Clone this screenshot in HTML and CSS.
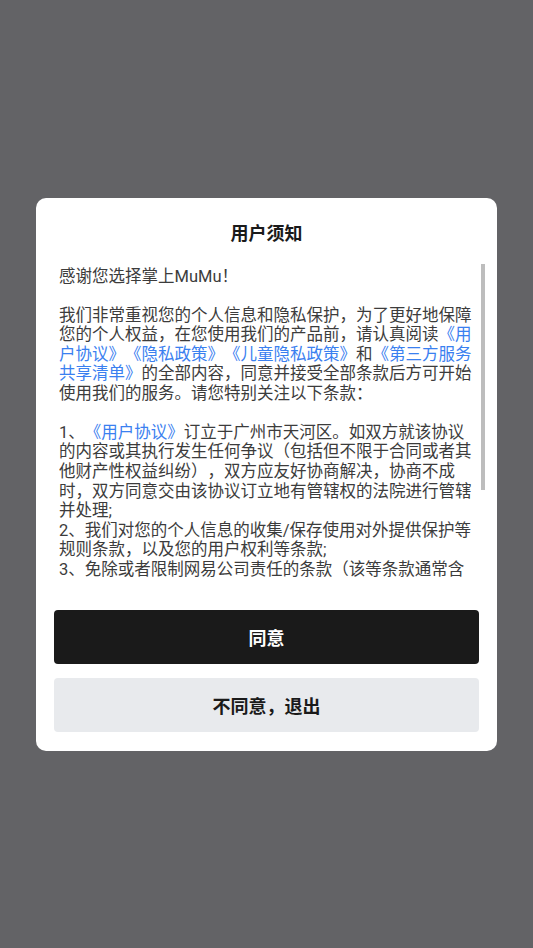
FILE: index.html
```html
<!DOCTYPE html>
<html lang="zh-CN">
<head>
<meta charset="utf-8">
<title>用户须知</title>
<link rel="stylesheet" href="styles.css">
</head>
<body>
<div class="overlay">
  <div class="modal">
    <h1 class="title">用户须知</h1>
    <div class="scroll">
      <div class="scroll-content">
        <p class="para">感谢您选择掌上MuMu！</p>
        <p class="para">我们非常重视您的个人信息和隐私保护，为了更好地保障您的个人权益，在您使用我们的产品前，请认真阅读<a class="link">《用户协议》</a><a class="link">《隐私政策》</a><a class="link">《儿童隐私政策》</a>和<a class="link">《第三方服务共享清单》</a>的全部内容，同意并接受全部条款后方可开始使用我们的服务。请您特别关注以下条款：</p>
        <p class="item">1、<a class="link">《用户协议》</a>订立于广州市天河区。如双方就该协议的内容或其执行发生任何争议（包括但不限于合同或者其他财产性权益纠纷），双方应友好协商解决，协商不成时，双方同意交由该协议订立地有管辖权的法院进行管辖并处理;</p>
        <p class="item">2、我们对您的个人信息的收集/保存使用对外提供保护等规则条款，以及您的用户权利等条款;</p>
        <p class="item">3、免除或者限制网易公司责任的条款（该等条款通常含有“免除”、“限制”等字样）;</p>
        <p class="item">4、适用法律和争议解决条款。</p>
        <p class="item">如您同意以上协议内容，请点击“同意”并开始使用我们的产品和服务。</p>
      </div>
      <div class="scrollbar"><div class="thumb"></div></div>
    </div>
    <div class="actions">
      <button class="btn btn-primary">同意</button>
      <button class="btn btn-secondary">不同意，退出</button>
    </div>
  </div>
</div>
</body>
</html>
```

FILE: styles.css
```css
html, body {
  margin: 0;
  padding: 0;
}
body {
  background: #636366;
  font-family: Roboto, "Noto Sans CJK SC", sans-serif;
  text-spacing-trim: space-all;
}
.overlay {
  width: 533px;
  height: 948px;
  display: flex;
  align-items: center;
  justify-content: center;
}
.modal {
  width: 461px;
  height: 553px;
  box-sizing: border-box;
  background: #ffffff;
  border-radius: 10px;
  padding: 22px 0 18px;
  display: flex;
  flex-direction: column;
}
.title {
  margin: 0;
  font-family: "Noto Sans CJK SC", sans-serif;
  font-size: 18px;
  line-height: 24px;
  font-weight: 700;
  color: #1a1a1a;
  text-align: center;
}
.scroll {
  margin: 20px 12px 0 23px;
  height: 313px;
  flex: none;
  display: flex;
}
.scroll-content {
  flex: 1;
  min-width: 0;
  overflow: hidden;
  padding: 3px 7px 0 0;
  font-size: 16.5px;
  line-height: 19.55px;
  color: #3c3c3c;
}
.scrollbar {
  width: 4px;
  flex: none;
}
.thumb {
  height: 226px;
  background: #bdbdbd;
}
.para {
  margin: 0 0 19.55px;
}
.item {
  margin: 0;
}
.link {
  color: #3a80f0;
  text-decoration: none;
}
.actions {
  margin: 33px 18px 0;
  display: flex;
  flex-direction: column;
  gap: 14px;
}
.btn {
  height: 54px;
  border: none;
  border-radius: 4px;
  font-family: "Noto Sans CJK SC", sans-serif;
  font-size: 18px;
  font-weight: 700;
  padding: 0;
}
.btn-primary {
  background: #1a1a1a;
  color: #ffffff;
}
.btn-secondary {
  background: #e8eaed;
  color: #1a1a1a;
}
```
